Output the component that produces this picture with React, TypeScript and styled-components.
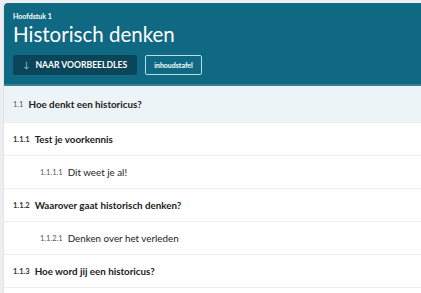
import styled, { createGlobalStyle } from "styled-components";

const GlobalStyle = createGlobalStyle`
  body {
    margin: 0;
    background: #eceef0;
    font-family: "Lato", "Open Sans", sans-serif;
  }
`;

const Page = styled.div`
  margin: 3px 0 0 3px;
  height: 290px;
  background: #ffffff;
  border-left: 1px solid #e2e5e7;
  overflow: hidden;
`;

const Header = styled.header`
  background: #0f6982;
  border-top-left-radius: 4px;
  border-bottom: 2px solid #3b7f93;
  padding: 8px 10px 9px 9px;
  color: #ffffff;
`;

const Chapter = styled.div`
  font-size: 7px;
  font-weight: 700;
  line-height: 10px;
`;

const Title = styled.h1`
  margin: 0 0 8px;
  font-size: 20.5px;
  font-weight: 400;
  line-height: 26px;
`;

const Buttons = styled.div`
  display: flex;
  gap: 8px;
`;

const Button = styled.button<{ $filled?: boolean }>`
  height: 20px;
  padding: 0 ${(p) => (p.$filled ? "10px" : "8px")};
  font-family: inherit;
  font-size: ${(p) => (p.$filled ? "8.6px" : "7px")};
  font-weight: 700;
  color: #ffffff;
  background: ${(p) => (p.$filled ? "#0b4559" : "transparent")};
  border: ${(p) => (p.$filled ? "none" : "1px solid #b9dbe6")};
  border-radius: 2px;
  display: flex;
  align-items: center;
  gap: 6px;
`;

const Arrow = styled.span`
  font-weight: 400;
  color: #9fc3cf;
`;

const List = styled.ul`
  margin: 0;
  padding: 0;
  list-style: none;
`;

const Row = styled.li<{ $level: number }>`
  display: flex;
  align-items: center;
  gap: 5px;
  height: ${(p) => (p.$level === 1 ? "36px" : "32px")};
  padding-left: ${(p) => (p.$level === 4 ? "36px" : "9px")};
  background: ${(p) => (p.$level === 1 ? "#edf4f7" : "#ffffff")};
  border-bottom: 1px solid #eceeef;
  color: #222222;
`;

const Num = styled.span<{ $bold?: boolean }>`
  font-size: 7.5px;
  font-weight: ${(p) => (p.$bold ? 700 : 400)};
  color: ${(p) => (p.$bold ? "#333333" : "#555555")};
`;

const Label = styled.span<{ $bold?: boolean }>`
  font-size: 9.8px;
  font-weight: ${(p) => (p.$bold ? 700 : 400)};
`;

const items = [
  { num: "1.1", label: "Hoe denkt een historicus?", level: 1 },
  { num: "1.1.1", label: "Test je voorkennis", level: 3 },
  { num: "1.1.1.1", label: "Dit weet je al!", level: 4 },
  { num: "1.1.2", label: "Waarover gaat historisch denken?", level: 3 },
  { num: "1.1.2.1", label: "Denken over het verleden", level: 4 },
  { num: "1.1.3", label: "Hoe word jij een historicus?", level: 3 },
];

export default function App() {
  return (
    <>
      <GlobalStyle />
      <Page>
        <Header>
          <Chapter>Hoofdstuk 1</Chapter>
          <Title>Historisch denken</Title>
          <Buttons>
            <Button $filled>
              <Arrow>↓</Arrow>NAAR VOORBEELDLES
            </Button>
            <Button>inhoudstafel</Button>
          </Buttons>
        </Header>
        <List>
          {items.map((it) => (
            <Row key={it.num} $level={it.level}>
              <Num $bold={it.level === 3}>{it.num}</Num>
              <Label $bold={it.level !== 4}>{it.label}</Label>
            </Row>
          ))}
        </List>
      </Page>
    </>
  );
}
